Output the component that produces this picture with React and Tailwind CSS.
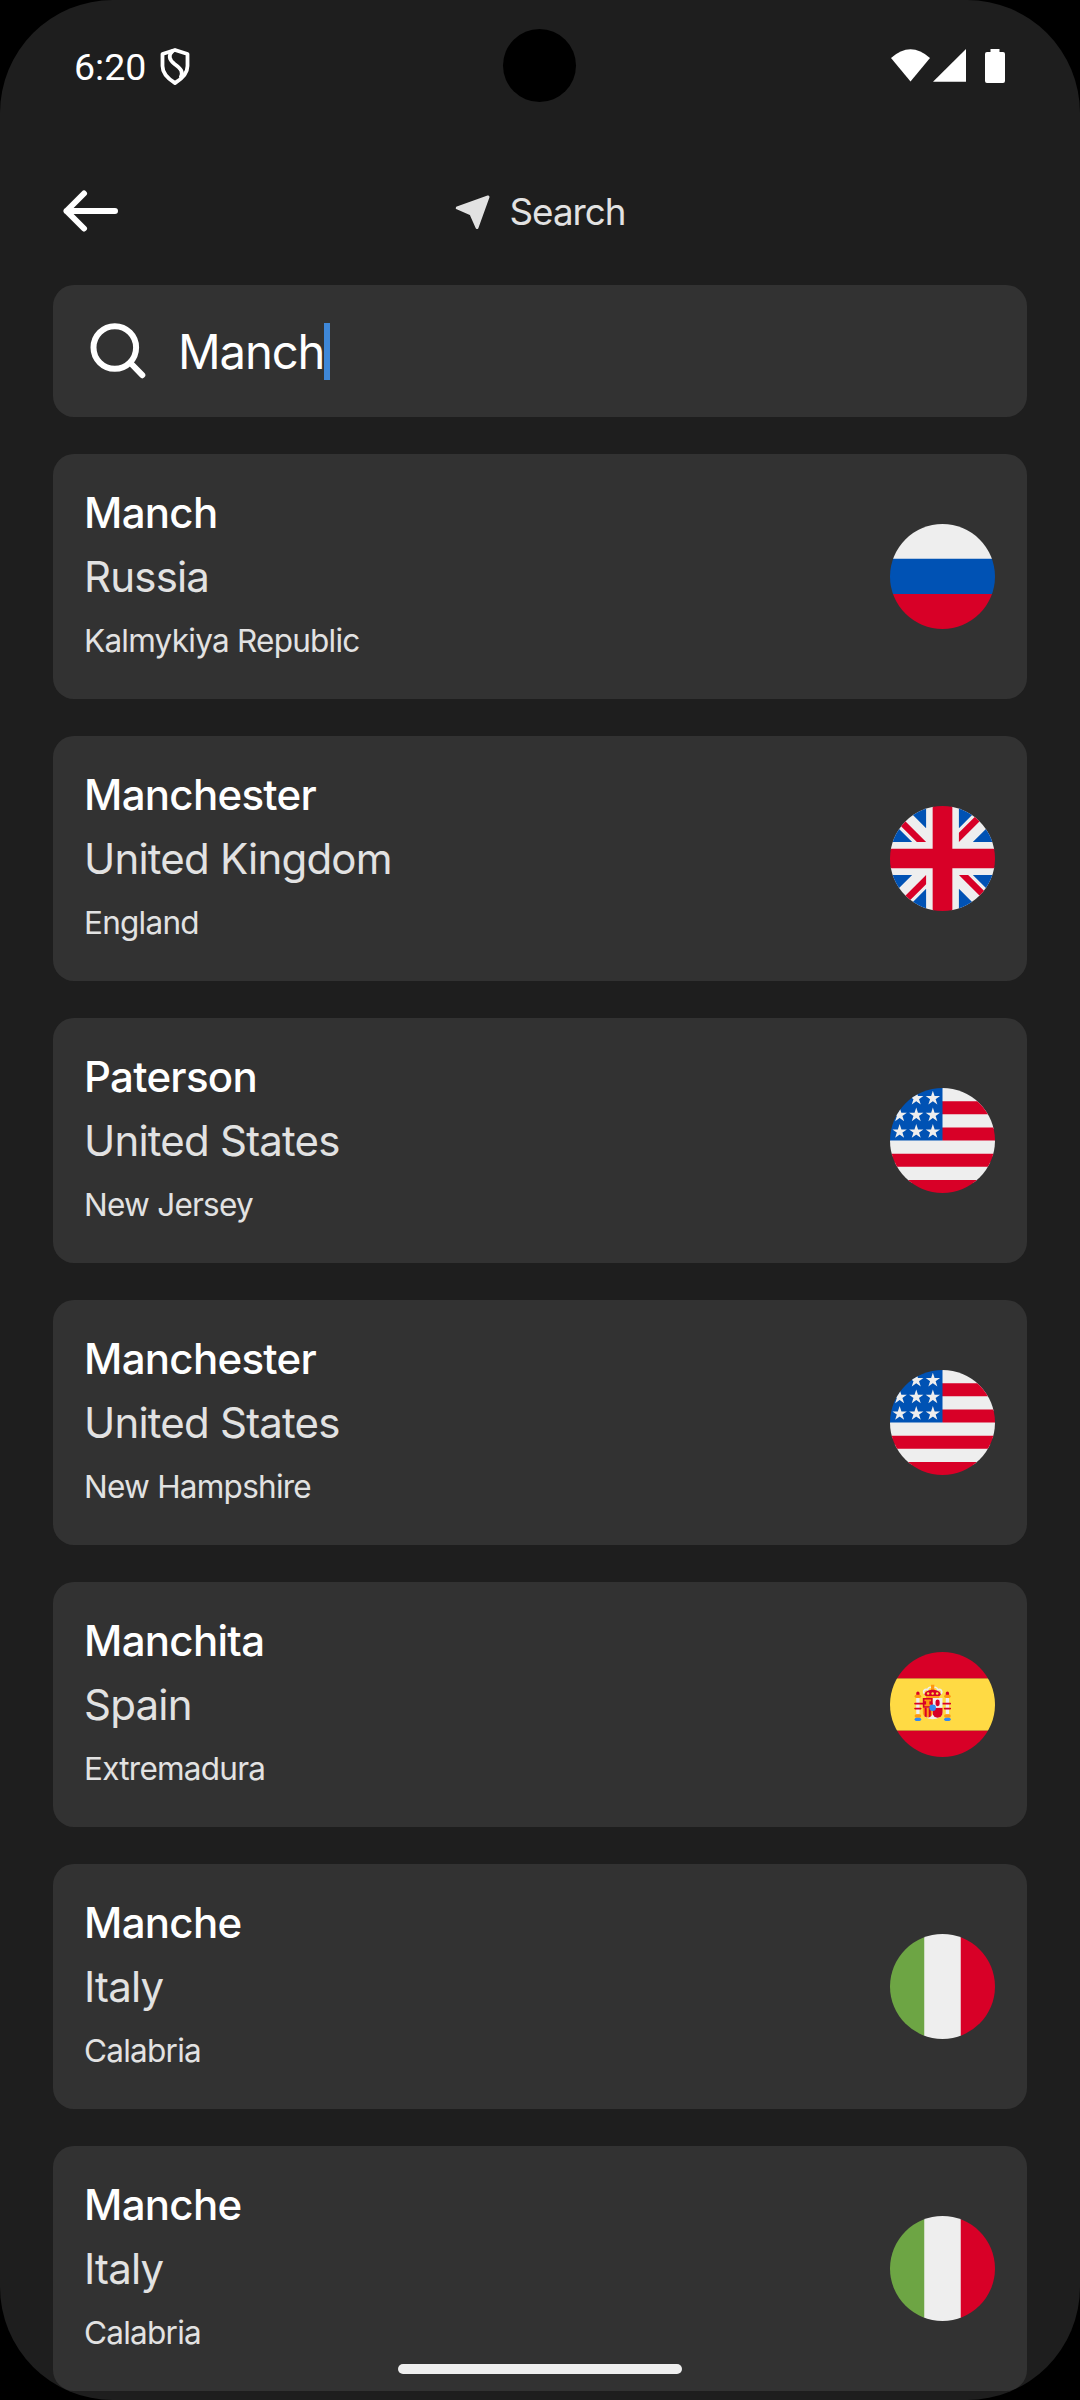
import React from "react";

function Flag({ children }) {
  return (
    <div className="h-[105px] w-[105px] shrink-0 overflow-hidden rounded-full">
      <svg viewBox="0 0 512 512" className="block h-full w-full">
        {children}
      </svg>
    </div>
  );
}

function RussiaFlag() {
  return (
    <Flag>
      <path fill="#eee" d="M0 0h512v171H0z" />
      <path fill="#0052b4" d="M0 170h512v172H0z" />
      <path fill="#d80027" d="M0 341h512v171H0z" />
    </Flag>
  );
}

function UkFlag() {
  return (
    <Flag>
      <path fill="#eee" d="m0 0 8 22-8 23v23l32 54-32 54v32l32 48-32 48v32l32 54-32 54v68l22-8 23 8h23l54-32 54 32h32l48-32 48 32h32l54-32 54 32h68l-8-22 8-23v-23l-32-54 32-54v-32l-32-48 32-48v-32l-32-54 32-54V0l-22 8-23-8h-23l-54 32-54-32h-32l-48 32-48-32h-32l-54 32L68 0H0z" />
      <path fill="#0052b4" d="M336 0v108L444 0Zm176 68L404 176h108zM0 176h108L0 68ZM68 0l108 108V0Zm108 512V404L68 512ZM0 444l108-108H0Zm512-108H404l108 108Zm-68 176L336 404v108z" />
      <path fill="#d80027" d="M0 0v45l131 131h45L0 0zm208 0v208H0v96h208v208h96V304h208v-96H304V0h-96zm259 0L336 131v45L512 0h-45zM176 336 0 512h45l131-131v-45zm160 0 176 176v-45L381 336h-45z" />
    </Flag>
  );
}

function UsFlag() {
  return (
    <Flag>
      <path fill="#eee" d="M256 0h256v64l-32 32 32 32v64l-32 32 32 32v64l-32 32 32 32v64l-256 32L0 448v-64l32-32-32-32v-64z" />
      <path fill="#d80027" d="M224 64h288v64H224Zm0 128h288v64H256ZM0 320h512v64H0Zm0 128h512v64H0Z" />
      <path fill="#0052b4" d="M0 0h256v256H0Z" />
      <path fill="#eee" d="m187 243 57-41h-70l57 41-22-67zm-81 0 57-41H93l57 41-22-67zm-81 0 57-41H12l57 41-22-67zm162-81 57-41h-70l57 41-22-67zm-81 0 57-41H93l57 41-22-67zm-81 0 57-41H12l57 41-22-67Zm162-82 57-41h-70l57 41-22-67Zm-81 0 57-41H93l57 41-22-67zm-81 0 57-41H12l57 41-22-67Z" />
    </Flag>
  );
}

function SpainFlag() {
  return (
    <Flag>
      <path fill="#ffda44" d="M0 128h512v256H0Z" />
      <path fill="#d80027" d="M0 0h512v128H0zm0 384h512v128H0z" />
      <g fill="#eee">
        <path d="M144 304h-16v-80h16zm128 0h16v-80h-16z" />
        <ellipse cx="208" cy="296" rx="48" ry="32" />
      </g>
      <g fill="#d80027">
        <rect width="16" height="24" x="128" y="192" rx="8" />
        <rect width="16" height="24" x="272" y="192" rx="8" />
        <path d="M208 272v24a24 24 0 0 0 24 24 24 24 0 0 0 24-24v-24h-24z" />
      </g>
      <g fill="#ff9811">
        <rect width="32" height="16" x="120" y="208" ry="8" />
        <rect width="32" height="16" x="264" y="208" ry="8" />
        <rect width="32" height="16" x="120" y="304" ry="8" />
        <rect width="32" height="16" x="264" y="304" ry="8" />
        <path d="M160 272v24c0 8 4 14 9 19l5-6 5 10a21 21 0 0 0 10 0l5-10 5 6c6-5 9-11 9-19v-24h-9l-5 8-5-8h-10l-5 8-5-8z" />
      </g>
      <path fill="#d80027" d="M122 248a4 4 0 0 0-4 4 4 4 0 0 0 4 4h172a4 4 0 0 0 4-4 4 4 0 0 0-4-4zm0 24a4 4 0 0 0-4 4 4 4 0 0 0 4 4h28a4 4 0 0 0 4-4 4 4 0 0 0-4-4zm144 0a4 4 0 0 0-4 4 4 4 0 0 0 4 4h28a4 4 0 0 0 4-4 4 4 0 0 0-4-4z" />
      <path fill="#eee" d="M196 168c-7 0-13 5-15 11l-5-1c-9 0-16 7-16 16s7 16 16 16c7 0 13-4 15-11a16 16 0 0 0 17-4 16 16 0 0 0 17 4 16 16 0 1 0 10-20 16 16 0 0 0-27-5c-3-4-7-6-12-6zm0 8c5 0 8 4 8 8 0 5-3 8-8 8-4 0-8-3-8-8 0-4 4-8 8-8zm24 0c5 0 8 4 8 8 0 5-3 8-8 8-4 0-8-3-8-8 0-4 4-8 8-8zm-44 10 4 1 4 8c0 4-4 7-8 7s-8-3-8-8c0-4 4-8 8-8zm64 0c5 0 8 4 8 8 0 5-3 8-8 8-4 0-8-3-8-7l4-8z" />
      <path fill="#ff9811" d="M200 160h16v32h-16z" />
      <path fill="#eee" d="M208 224h48v48h-48z" />
      <path fill="#d80027" d="m248 208-8 8h-64l-8-8c0-13 18-24 40-24s40 11 40 24zm-88 16h48v48h-48z" />
      <rect width="20" height="32" x="222" y="232" fill="#d80027" rx="10" />
      <path fill="#ff9811" d="M168 232v8h8v16h-8v8h32v-8h-8v-16h8v-8zm8-16h64v8h-64z" />
      <g fill="#ffda44">
        <circle cx="186" cy="202" r="6" />
        <circle cx="208" cy="202" r="6" />
        <circle cx="230" cy="202" r="6" />
      </g>
      <path fill="#d80027" d="M169 272v43a24 24 0 0 0 10 4v-47h-10zm20 0v47a24 24 0 0 0 10-4v-43h-10z" />
      <g fill="#338af3">
        <circle cx="208" cy="272" r="16" />
        <rect width="32" height="16" x="264" y="320" ry="8" />
        <rect width="32" height="16" x="120" y="320" ry="8" />
      </g>
    </Flag>
  );
}

function ItalyFlag() {
  return (
    <Flag>
      <path fill="#eee" d="M167 0h178l25.900 252.300L345 512H167l-29.800-253.400z" />
      <path fill="#6da544" d="M0 0h167v512H0z" />
      <path fill="#d80027" d="M345 0h167v512H345z" />
    </Flag>
  );
}

const results = [
  { city: "Manch", country: "Russia", region: "Kalmykiya Republic", Icon: RussiaFlag },
  { city: "Manchester", country: "United Kingdom", region: "England", Icon: UkFlag },
  { city: "Paterson", country: "United States", region: "New Jersey", Icon: UsFlag },
  { city: "Manchester", country: "United States", region: "New Hampshire", Icon: UsFlag },
  { city: "Manchita", country: "Spain", region: "Extremadura", Icon: SpainFlag },
  { city: "Manche", country: "Italy", region: "Calabria", Icon: ItalyFlag },
  { city: "Manche", country: "Italy", region: "Calabria", Icon: ItalyFlag },
];

function ResultCard({ city, country, region, Icon }) {
  return (
    <li className="flex h-[245px] shrink-0 items-center justify-between rounded-[21px] bg-[#323232] pr-8 pl-[31px]">
      <div className="whitespace-nowrap">
        <p className="text-[42px] leading-[64px] font-medium tracking-[-0.7px] text-white">{city}</p>
        <p className="text-[42px] leading-[64px] tracking-[-0.8px] text-[#e2e2e2]">{country}</p>
        <p className="text-[31.5px] leading-[63px] tracking-[-0.75px] text-[#e2e2e2]">{region}</p>
      </div>
      <Icon />
    </li>
  );
}

function StatusBar() {
  return (
    <div className="flex h-[132px] shrink-0 items-center justify-between pr-[75px] pl-[74px]">
      <div className="flex items-center gap-[13px]">
        <span className="pt-[2px] font-[Roboto,sans-serif] text-[37.5px] leading-[44px] text-white">6:20</span>
        <svg width="32" height="38" viewBox="0 0 32 38" fill="none" stroke="#fff" strokeWidth="3.8" strokeLinejoin="round">
          <path d="M16 3 28.500 7v12c0 7-5 12.500-12.500 17C8.500 31.500 3.500 26 3.500 19V7z" />
          <path d="M14 3.500c-5 5-4 9 1.500 13.500 7 5 9 8 6 14" />
        </svg>
      </div>
      <svg width="114" height="34" viewBox="891 49 114 34" fill="#fff">
        <path d="M891 58q19.500-17.500 39 0L910.500 81.500z" />
        <path d="M966 49v32.700h-33z" />
        <path d="M990.500 49h9v3h3.500a2 2 0 0 1 2 2v27a2 2 0 0 1-2 2h-16a2 2 0 0 1-2-2V54a2 2 0 0 1 2-2h3.500z" />
      </svg>
    </div>
  );
}

export default function App() {
  return (
    <div className="h-[2400px] w-[1080px] overflow-hidden bg-black font-[Inter,sans-serif] [font-variation-settings:'opsz'_32]">
      <div className="relative flex h-full w-full flex-col overflow-hidden rounded-[113px] bg-[#1e1e1e]">
        <StatusBar />
        <div className="absolute top-[29px] left-[503px] h-[73px] w-[73px] rounded-full bg-black" />

        <header className="grid h-[153px] shrink-0 grid-cols-[1fr_auto_1fr] items-center px-[63px] pt-[5px]">
          <svg width="55" height="42" viewBox="63 190 55 42" fill="none" stroke="#fff" strokeWidth="6" strokeLinecap="round" strokeLinejoin="round">
            <path d="M115 211H66.500M84 193.500 66.500 211 84 228.500" />
          </svg>
          <div className="flex items-center gap-[19px]">
            <svg width="36" height="36" viewBox="456 193 36 36" fill="#e2e2e2" stroke="#e2e2e2" strokeWidth="3" strokeLinejoin="round">
              <path d="M458.300 208 489 197 478 227.500 472 214z" />
            </svg>
            <h1 className="pt-[2px] text-[36.75px] leading-[44px] tracking-[-1px] text-[#e2e2e2]">Search</h1>
          </div>
        </header>

        <div className="mx-[53px] flex h-[132px] shrink-0 items-center rounded-[21px] bg-[#323232] pl-[37px]">
          <svg width="56" height="56" viewBox="90 322 56 56" className="shrink-0" fill="none" stroke="#fff" strokeWidth="6" strokeLinecap="round">
            <circle cx="114.800" cy="346.500" r="21.300" />
            <path d="M130.500 362 142.300 374.200" />
          </svg>
          <span className="ml-[32px] text-[47.25px] leading-[57px] tracking-[-1.15px] text-white">Manch</span>
          <span className="h-[57px] w-[5.5px] bg-[#3e87d8]" />
        </div>

        <ul className="mx-[53px] mt-[37px] flex flex-col gap-[37px]">
          {results.map((item, i) => (
            <ResultCard key={i} {...item} />
          ))}
        </ul>

        <div className="absolute bottom-[26px] left-[398px] h-[10px] w-[284px] rounded-full bg-[#efefef]" />
      </div>
    </div>
  );
}
